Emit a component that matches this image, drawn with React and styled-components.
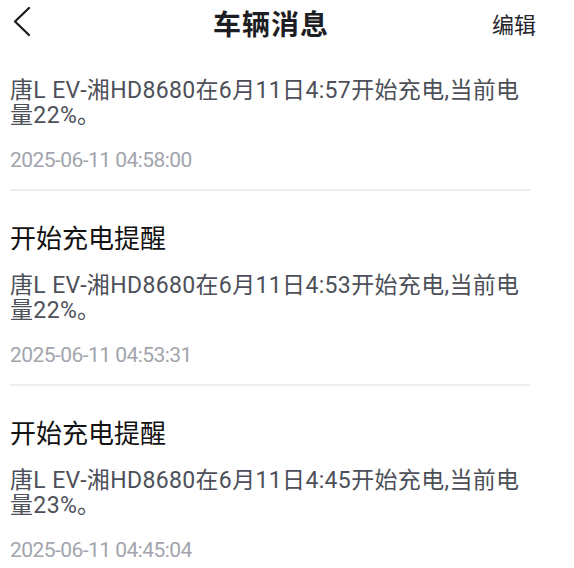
import React from "react"
import styled, { createGlobalStyle } from "styled-components"

const messages = [
  {
    id: 1,
    title: null,
    body: "唐L EV-湘HD8680在6月11日4:57开始充电,当前电量22%。",
    time: "2025-06-11 04:58:00",
  },
  {
    id: 2,
    title: "开始充电提醒",
    body: "唐L EV-湘HD8680在6月11日4:53开始充电,当前电量22%。",
    time: "2025-06-11 04:53:31",
  },
  {
    id: 3,
    title: "开始充电提醒",
    body: "唐L EV-湘HD8680在6月11日4:45开始充电,当前电量23%。",
    time: "2025-06-11 04:45:04",
  },
]

export default function App() {
  return (
    <>
      <GlobalStyle />
      <Page>
        <Header>
          <BackButton aria-label="返回">
            <svg width="18" height="30" viewBox="0 0 18 30" fill="none">
              <path
                d="M16 1 L2 14.5 L16 28"
                stroke="#1a1a1a"
                strokeWidth="2.2"
                strokeLinecap="round"
                strokeLinejoin="round"
              />
            </svg>
          </BackButton>
          <Title>车辆消息</Title>
          <EditButton>编辑</EditButton>
        </Header>

        <List>
          {messages.map((m) => (
            <Item key={m.id}>
              {m.title && <ItemTitle>{m.title}</ItemTitle>}
              <Body>{m.body}</Body>
              <Time>{m.time}</Time>
            </Item>
          ))}
        </List>
      </Page>
    </>
  )
}

const GlobalStyle = createGlobalStyle`
  body {
    margin: 0;
    background: #ffffff;
    font-family: Roboto, "Noto Sans CJK SC", sans-serif;
  }
`

const Page = styled.div`
  width: 574px;
  height: 568px;
  overflow: hidden;
  background: #ffffff;
`

const Header = styled.div`
  height: 47px;
  display: flex;
  align-items: center;
  padding: 0 38px 2px 13px;
  box-sizing: border-box;
`

const BackButton = styled.div`
  width: 18px;
  height: 30px;
  display: flex;
  align-items: center;
  margin-top: -1px;
`

const Title = styled.div`
  flex: 1;
  text-align: center;
  padding-left: 19px;
  font-size: 28px;
  font-weight: 700;
  color: #1d1d24;
  letter-spacing: 1px;
`

const EditButton = styled.div`
  font-size: 22px;
  color: #26262c;
`

const List = styled.div`
  padding: 0 44px 0 10px;
`

const Item = styled.div`
  padding: 31px 0 17px;
  border-bottom: 2px solid #eeeeee;
`

const ItemTitle = styled.div`
  font-size: 26px;
  line-height: 34px;
  color: #121212;
  margin-bottom: 17px;
`

const Body = styled.div`
  font-size: 23px;
  line-height: 25px;
  letter-spacing: 0.35px;
  color: #4d5059;
`

const Time = styled.div`
  margin-top: 20px;
  font-size: 21px;
  line-height: 24px;
  letter-spacing: -0.55px;
  color: #a2a5ad;
`
